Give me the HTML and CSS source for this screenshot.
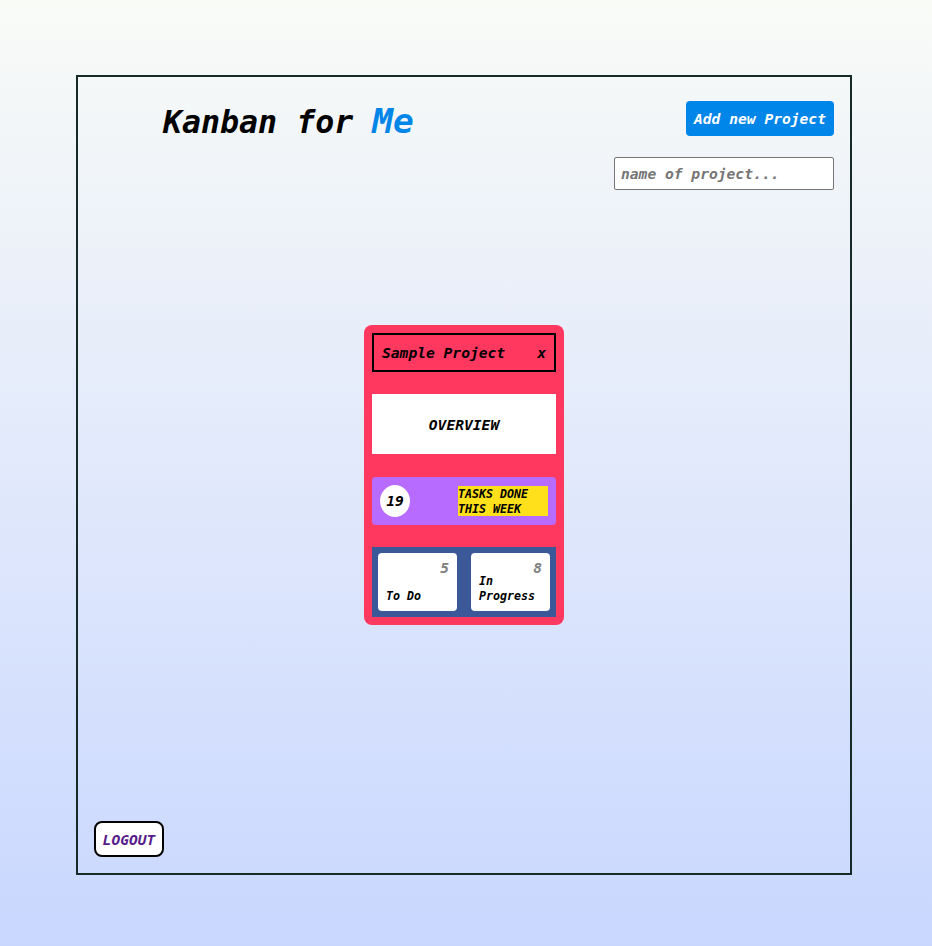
FILE: index.html
```html
<!DOCTYPE html>
<html lang="en">
<head>
<meta charset="utf-8">
<title>Kanban for Me</title>
<link rel="stylesheet" href="styles.css">
</head>
<body>
<main class="frame">
  <header class="header">
    <h1 class="title">Kanban for <span class="accent">Me</span></h1>
    <form class="new-project">
      <button class="add" type="button">Add new Project</button>
      <input class="name" type="text" placeholder="name of project...">
    </form>
  </header>
  <section class="card">
    <div class="card-title"><span>Sample Project</span><span>x</span></div>
    <div class="overview">OVERVIEW</div>
    <div class="done">
      <span class="done-count">19</span>
      <span class="done-label">TASKS DONE THIS WEEK</span>
    </div>
    <div class="columns">
      <div class="column"><span class="count">5</span><span class="label">To Do</span></div>
      <div class="column"><span class="count">8</span><span class="label">In Progress</span></div>
    </div>
  </section>
  <a class="logout">LOGOUT</a>
</main>
</body>
</html>
```
FILE: styles.css
```css
* { box-sizing: border-box; }
body {
  margin: 0;
  height: 946px;
  padding: 75px 80px 71px 76px;
  background: linear-gradient(#f9fbf7, #c9d7ff);
  font: italic bold 14.62px/20px "DejaVu Sans Mono", monospace;
  color: #000;
}
.frame {
  display: flex;
  flex-direction: column;
  height: 800px;
  padding: 24px 16px 16px;
  border: 2px solid #162b28;
}
.header {
  display: flex;
  justify-content: space-between;
  height: 89px;
}
.title {
  margin: 0 0 0 69px;
  font-size: 31.6px;
  line-height: 40px;
  white-space: pre;
}
.accent { color: #0085e8; font-size: 34.5px; }
.new-project {
  display: flex;
  flex-direction: column;
  align-items: flex-end;
  gap: 21px;
}
.add {
  width: 148px;
  height: 35px;
  padding: 0;
  border: 0;
  border-radius: 4px;
  background: #0085e8;
  color: #fff;
  font: inherit;
}
.name {
  width: 220px;
  height: 33px;
  padding: 0 6px;
  border: 1px solid #767676;
  border-radius: 2px;
  background: #fff;
  font: inherit;
}
.name::placeholder { color: #757575; opacity: 1; }
.card {
  align-self: center;
  width: 200px;
  height: 300px;
  margin-top: 135px;
  padding: 8px;
  border-radius: 8px;
  background: #ff3860;
}
.card-title {
  display: flex;
  justify-content: space-between;
  align-items: center;
  height: 39px;
  padding: 0 8px;
  border: 2px solid #000;
}
.overview {
  display: flex;
  align-items: center;
  justify-content: center;
  height: 60px;
  margin-top: 22px;
  padding-top: 1px;
  background: #fff;
}
.done {
  display: flex;
  align-items: center;
  justify-content: space-between;
  height: 48px;
  margin-top: 23px;
  padding: 0 8px;
  border-radius: 4px;
  background: #b86bff;
}
.done-count {
  width: 30px;
  height: 32px;
  border-radius: 50%;
  background: #fff;
  line-height: 32px;
  text-align: center;
}
.done-label {
  width: 90px;
  height: 30px;
  padding-top: 1px;
  background: #ffe01b;
  font-size: 11.65px;
  line-height: 15px;
}
.columns {
  display: flex;
  justify-content: space-between;
  height: 70px;
  margin-top: 22px;
  padding: 6px;
  background: #3b5998;
}
.column {
  display: flex;
  flex-direction: column;
  justify-content: space-between;
  width: 79px;
  padding: 5px 8px 7px;
  border-radius: 4px;
  background: #fff;
}
.count { height: 15px; color: #808080; text-align: right; }
.label { font-size: 11.65px; line-height: 15px; }
.logout {
  display: flex;
  align-items: center;
  justify-content: center;
  width: 70px;
  height: 36px;
  margin-top: auto;
  padding-top: 2px;
  border: 2px solid #000;
  border-radius: 8px;
  background: #fff;
  color: #551a8b;
}
```
